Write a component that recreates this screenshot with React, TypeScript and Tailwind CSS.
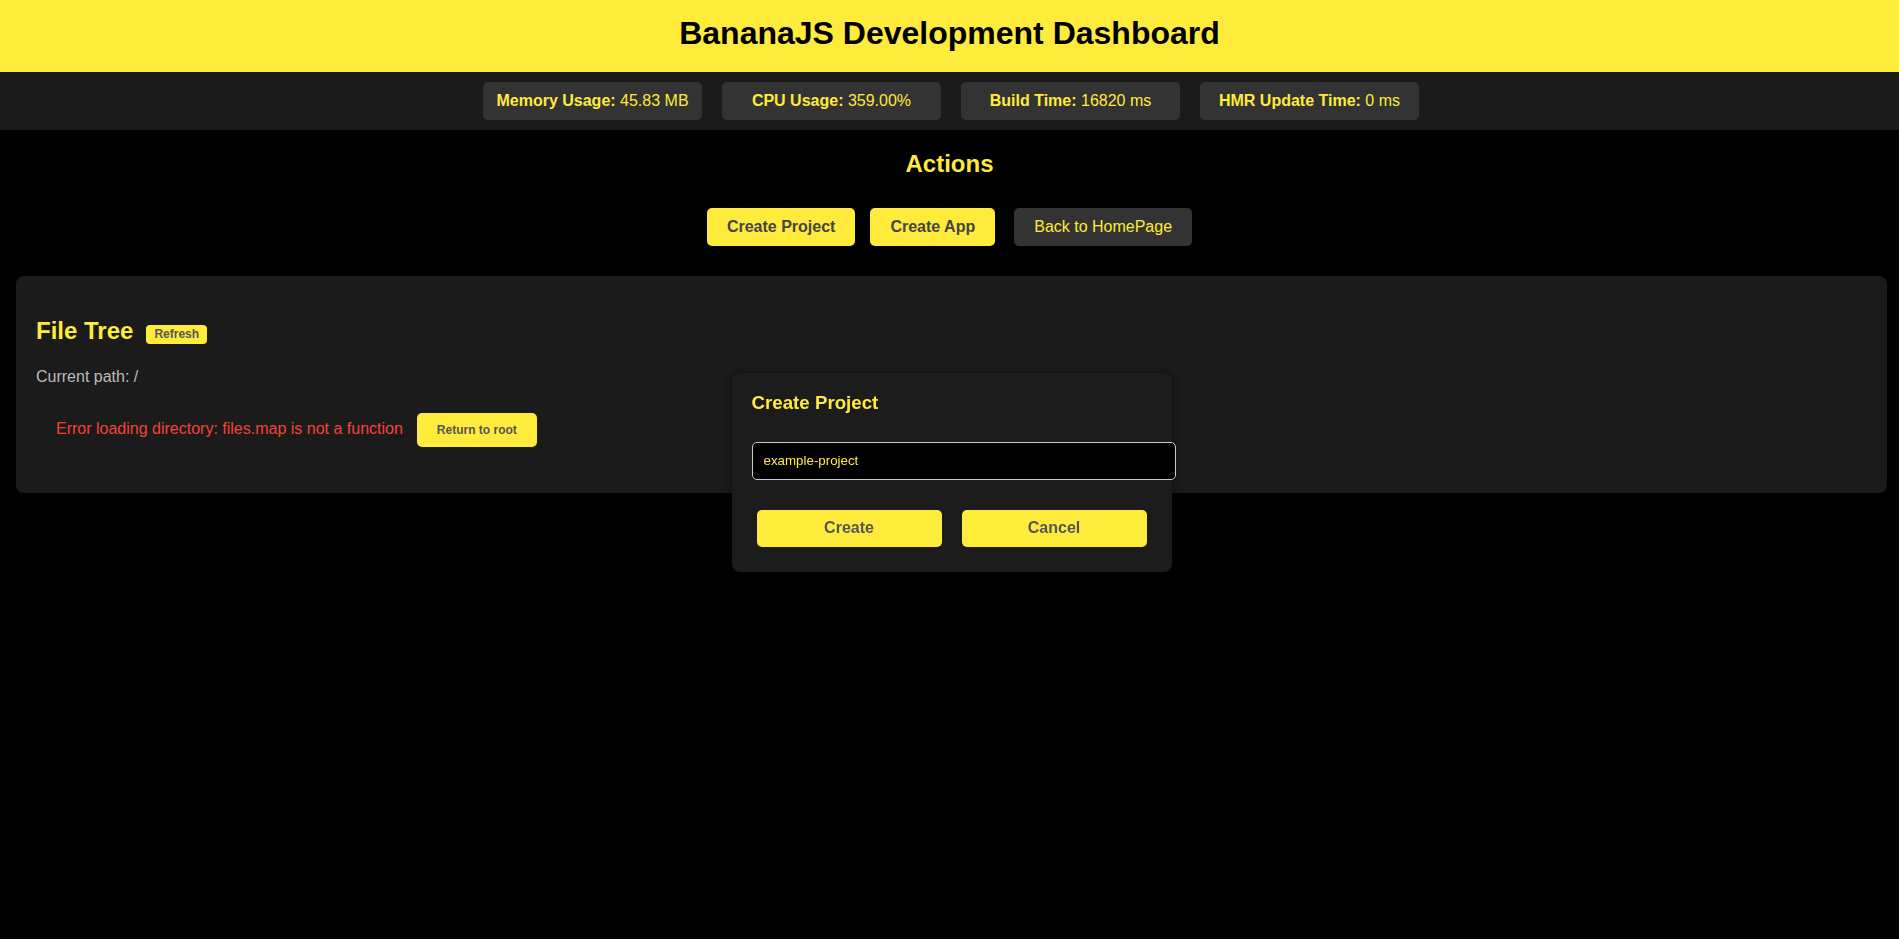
import { useState } from 'react';

const stats = [
  { label: 'Memory Usage:', value: '45.83 MB' },
  { label: 'CPU Usage:', value: '359.00%' },
  { label: 'Build Time:', value: '16820 ms' },
  { label: 'HMR Update Time:', value: '0 ms' },
];

export default function App() {
  const [projectName, setProjectName] = useState('example-project');
  const [showModal, setShowModal] = useState(true);

  return (
    <div className="min-h-screen bg-black font-['Liberation_Sans',Arial,sans-serif] text-[16px]">
      <header className="h-[72px] bg-[#ffeb3b] pt-[15px] text-center">
        <h1 className="text-[32px] font-bold leading-[37px] text-black">BananaJS Development Dashboard</h1>
      </header>

      <div className="flex h-[58px] items-center justify-center gap-[20px] bg-[#1b1b1b] pl-[3px]">
        {stats.map((s) => (
          <div
            key={s.label}
            className="flex h-[38px] w-[219px] items-center justify-center rounded-[5px] bg-[#333] text-[#ffeb3b]"
          >
            <span className="font-bold">{s.label}</span>
            <span>&nbsp;{s.value}</span>
          </div>
        ))}
      </div>

      <section className="pt-[20px] text-center">
        <h2 className="text-[24px] font-bold leading-[28px] text-[#ffeb3b]">Actions</h2>
        <div className="mt-[30px] flex justify-center">
          <button
            onClick={() => setShowModal(true)}
            className="mr-[15px] h-[38px] rounded-[5px] bg-[#ffeb3b] px-5 font-bold text-[#444]"
          >
            Create Project
          </button>
          <button className="mr-[19px] h-[38px] rounded-[5px] bg-[#ffeb3b] px-5 font-bold text-[#444]">
            Create App
          </button>
          <button className="h-[38px] rounded-[5px] bg-[#333] px-5 text-[#ffeb3b]">Back to HomePage</button>
        </div>
      </section>

      <div className="mb-4 ml-4 mr-3 mt-[30px] h-[217px] rounded-[8px] bg-[#1b1b1b] px-5 pt-[41px]">
        <div className="flex items-end gap-[13px]">
          <h2 className="text-[24px] font-bold leading-[28px] text-[#ffeb3b]">File Tree</h2>
          <button className="mb-[1px] h-[19px] rounded-[4px] bg-[#ffeb3b] px-2 text-[12px] font-bold leading-[19px] text-[#555]">
            Refresh
          </button>
        </div>
        <p className="mt-[23px] leading-[18px] text-[#bbb]">Current path: /</p>
        <div className="mt-[27px] flex items-baseline pl-5">
          <span className="text-[#f44336]">Error loading directory: files.map is not a function</span>
          <button className="ml-[14px] h-[34px] rounded-[5px] bg-[#ffeb3b] px-5 text-[12px] font-bold text-[#555]">
            Return to root
          </button>
        </div>
      </div>

      {showModal && (
        <div className="fixed left-1/2 top-1/2 w-[440px] -translate-x-[218px] -translate-y-[97px] rounded-[8px] bg-[#1c1c1c] px-5 pb-[25px] pt-[19px] shadow-[0_0_10px_rgba(0,0,0,0.6)]">
          <h3 className="text-[18.72px] font-bold leading-[22px] text-[#ffeb3b]">Create Project</h3>
          <input
            autoFocus
            value={projectName}
            onChange={(e) => setProjectName(e.target.value)}
            className="mt-[28px] box-content block h-[36px] w-[400px] rounded-[5px] border border-[#ccc] bg-black px-[11px] py-0 text-[13.33px] text-[#ffeb3b] caret-[#ffeb3b] outline-none"
          />
          <div className="mt-[30px] flex gap-[20px] px-[5px]">
            <button className="h-[37px] flex-1 rounded-[5px] bg-[#ffeb3b] font-bold text-[#555]">Create</button>
            <button
              onClick={() => setShowModal(false)}
              className="h-[37px] flex-1 rounded-[5px] bg-[#ffeb3b] font-bold text-[#555]"
            >
              Cancel
            </button>
          </div>
        </div>
      )}
    </div>
  );
}
